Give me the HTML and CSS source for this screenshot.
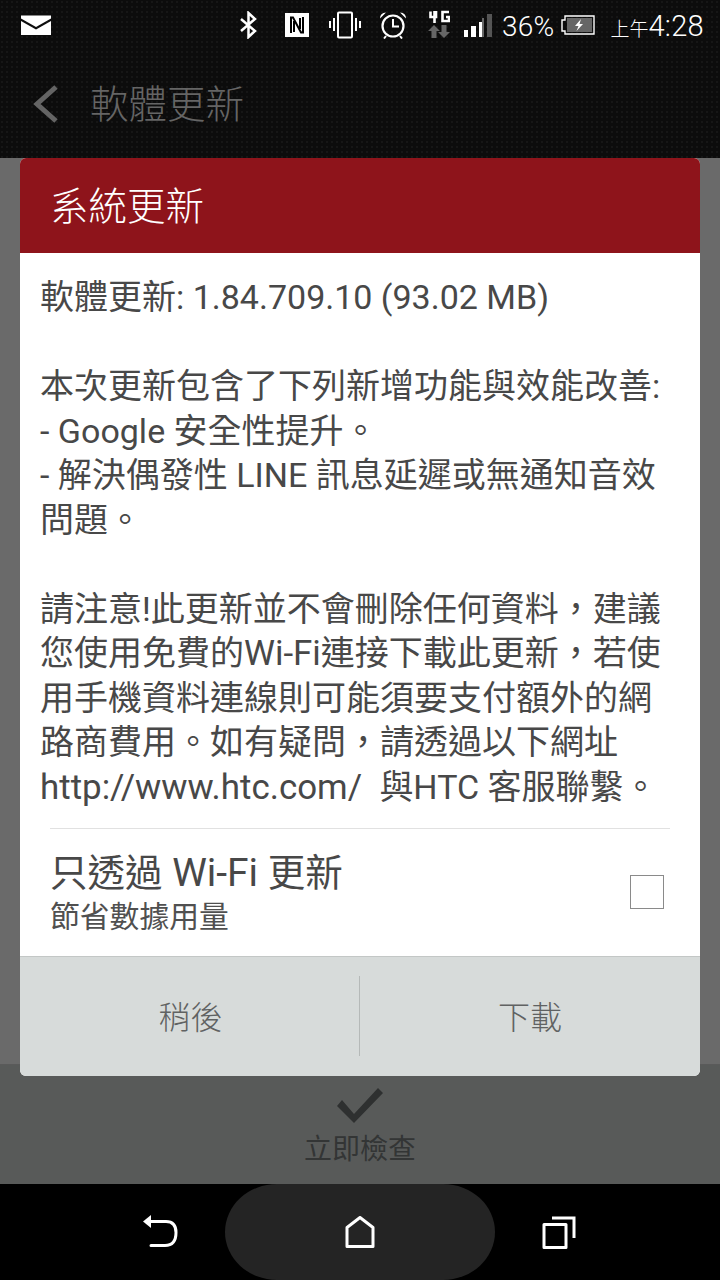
FILE: index.html
```html
<!DOCTYPE html>
<html lang="zh-Hant">
<head>
<meta charset="utf-8">
<title>軟體更新</title>
<link rel="stylesheet" href="styles.css">
</head>
<body>
<div class="screen">
  <header class="top">
    <div class="status">
      <svg class="ic-mail" width="32" height="22" viewBox="0 0 32 22"><path fill="#fff" d="M0 1.500h30v3L15 13 0 4.500zM0 7l15 8.500L30 7v14H0z"/></svg>
      <span class="spacer"></span>
      <svg class="ic" width="18" height="28" viewBox="0 0 18 28"><path fill="none" stroke="#fff" stroke-width="2.500" d="M2 8l14 12-6.500 6V2L16 8 2 20"/></svg>
      <svg class="ic gap1" width="24" height="24" viewBox="0 0 24 24"><path fill="#fff" d="M0 0h24v24H0z"/><path fill="none" stroke="#000" stroke-width="2" d="M6 20V4.500h2L16 19.500h2V4M9 8v11M15 5v11"/></svg>
      <svg class="ic gap2" width="32" height="28" viewBox="0 0 32 28"><path fill="none" stroke="#fff" stroke-width="2" d="M9 2.500q0-1 1-1h12q1 0 1 1v23q0 1-1 1H10q-1 0-1-1zM5 7v13M1 10v7M27 7v13M31 10v7"/></svg>
      <svg class="ic gap3" width="28" height="28" viewBox="0 0 28 28"><circle cx="14" cy="15" r="10.500" fill="none" stroke="#fff" stroke-width="2.200"/><path fill="none" stroke="#fff" stroke-width="2" d="M14 8v7.500h6M7 25l-2 2.500M21 25l2 2.500"/><path fill="#fff" d="M1 7.500Q1 2 7 1.500zM27 7.500Q27 2 21 1.500z"/></svg>
      <svg class="ic gap4" width="22" height="30" viewBox="0 0 22 30"><path fill="none" stroke="#fff" stroke-width="2.600" d="M8 1v6H2.500V1.500M6.500 1v12M21 2h-6.500v9H21V7h-3"/><path fill="#666" d="M6 15l6 6H8.500v7h-5v-7H0zM16 28l6-6h-3.500v-7h-5v7H10z"/></svg>
      <svg class="ic gap5" width="28" height="24" viewBox="0 0 28 24"><path fill="#fff" d="M0 16h4v7H0zM7 12h5v11H7z"/><path fill="#fff" d="M15 8h3v15h-3z"/><path fill="#666" d="M18 8h2v15h-2zM18 4h2v4h-2z"/><path fill="#555" d="M23 0h5v23h-5z"/></svg>
      <span class="pct">36%</span>
      <svg class="ic gap6" width="34" height="20" viewBox="0 0 34 20"><path fill="none" stroke="#fff" stroke-width="1.400" d="M4 1h29v18H4v-3H1V5h3z"/><path fill="#666" d="M6 3h25v14H6z"/><path fill="#fff" d="M20 4l-6 7h3.500l-2 5 6.500-7h-3.500z"/></svg>
      <span class="clock"><span class="ampm">上午</span>4:28</span>
    </div>
    <div class="bar">
      <svg class="ic-back" width="26" height="38" viewBox="0 0 26 38"><path fill="none" stroke="#646464" stroke-width="5" d="M24 2L5 19l19 17"/></svg>
      <h1 class="bar-title">軟體更新</h1>
    </div>
  </header>

  <main class="page">
    <div class="page-fill"></div>
    <div class="check-bar">
      <svg width="48" height="36" viewBox="0 0 48 36"><path fill="#2e3030" d="M6 12L1 18l17 17L47 5l-5-5-24 26z"/></svg>
      <span class="check-label">立即檢查</span>
    </div>

    <section class="dialog">
      <h2 class="dlg-head">系統更新</h2>
      <div class="dlg-body">
        <p class="msg">軟體更新: 1.84.709.10 (93.02 MB)<br><br>本次更新包含了下列新增功能與效能改善:<br>- Google 安全性提升。<br>- 解決偶發性 LINE 訊息延遲或無通知音效<br>問題。<br><br>請注意!此更新並不會刪除任何資料，建議<br>您使用免費的<span class="lat">Wi-Fi</span>連接下載此更新，若使<br>用手機資料連線則可能須要支付額外的網<br>路商費用。如有疑問，請透過以下網址<br><span class="lat">http://www.htc.com/&nbsp; </span>與HTC 客服聯繫。</p>
        <div class="opt">
          <div class="opt-text">
            <div class="opt-title">只透過<span class="lat-t"> Wi-Fi </span>更新</div>
            <div class="opt-sub">節省數據用量</div>
          </div>
          <span class="box"></span>
        </div>
      </div>
      <div class="dlg-foot">
        <button class="btn btn-left">稍後</button>
        <span class="sep"></span>
        <button class="btn">下載</button>
      </div>
    </section>
  </main>

  <nav class="nav">
    <svg width="36" height="34" viewBox="0 0 36 34"><path fill="none" stroke="#fff" stroke-width="3" stroke-linecap="round" d="M6 6.500h18q10 0 10 11 0 13-11 13H9"/><path fill="#fff" d="M1 6.500L9 0v13z"/></svg>
    <div class="home">
      <svg width="30" height="32" viewBox="0 0 30 32"><path fill="none" stroke="#fff" stroke-width="3" stroke-linejoin="round" d="M2 30.500V11.500L15 1.500l13 10v19z"/></svg>
    </div>
    <svg width="34" height="34" viewBox="0 0 34 34"><path fill="none" stroke="#fff" stroke-width="3" stroke-linejoin="round" d="M2 9.500h22v23H2z"/><path fill="none" stroke="#fff" stroke-width="3" d="M10 3h22v20"/></svg>
  </nav>
</div>
</body>
</html>
```

FILE: styles.css
```css
* { box-sizing: border-box; }
html, body { margin: 0; padding: 0; }
body {
  width: 720px;
  height: 1280px;
  overflow: hidden;
  background: #000;
  font-family: Roboto, "Noto Sans CJK TC", sans-serif;
}
.screen { display: flex; flex-direction: column; height: 1280px; }

.top {
  height: 158px;
  flex: none;
  background-color: #0c0c0c;
  background-image: radial-gradient(circle at 2px 2px, #161616 0, #161616 1px, transparent 1.500px);
  background-size: 5px 5px;
}
.status {
  height: 52px;
  display: flex;
  align-items: center;
  padding: 0 16px 2px 21px;
}
.spacer { flex: 1; }
.ic { flex: none; display: block; }
.gap1 { margin-left: 28px; }
.gap2 { margin-left: 20px; }
.gap3 { margin-left: 18px; }
.gap4 { margin-left: 21px; }
.gap5 { margin-left: 14px; margin-top: 2px; }
.pct { margin-left: 10px; color: #fff; font-size: 28px; font-weight: 300; letter-spacing: .2px; padding-top: 2px; }
.gap6 { margin-left: 7px; }
.clock { margin-left: 15px; color: #fff; font-size: 29px; font-weight: 300; white-space: nowrap; letter-spacing: .3px; padding-top: 2px; }
.ampm { font-size: 19px; letter-spacing: 0; }

.bar { height: 106px; display: flex; align-items: center; padding: 0 0 0 32px; }
.ic-back { flex: none; margin-top: -2px; }
.bar-title { margin: 0 0 0 32px; font-size: 38.500px; font-weight: 300; line-height: 1; color: #656565; }

.page { position: relative; flex: 1; display: flex; flex-direction: column; background: #6a6a6a; }
.page-fill { flex: 1; }
.check-bar {
  height: 120px;
  flex: none;
  border-top: 1px solid #5a5a5a;
  background: #585a59;
  display: flex;
  flex-direction: column;
  align-items: center;
  padding-top: 23px;
}
.check-label { margin-top: 10px; font-size: 28px; line-height: 32px; font-weight: 400; color: #333535; }

.dialog {
  position: absolute;
  top: 0;
  left: 20px;
  width: 680px;
  height: 918px;
  display: flex;
  flex-direction: column;
  border-radius: 6px;
  overflow: hidden;
  background: #fff;
}
.dlg-head {
  margin: 0;
  height: 95px;
  flex: none;
  padding: 0 0 0 30px;
  background: #8e141b;
  color: #fff;
  font-size: 38.500px;
  line-height: 98px;
  font-weight: 300;
}
.dlg-body { flex: 1; display: flex; flex-direction: column; padding: 0 30px 0 20px; }
.msg {
  margin: 22px 0 0;
  font-size: 34px;
  line-height: 44.500px;
  font-weight: 400;
  color: #484848;
  white-space: nowrap;
}
.lat { font-size: 34.900px; line-height: 1; }
.opt {
  margin: 19px 0 0 10px;
  flex: 1;
  border-top: 1px solid #e1e1e1;
  display: flex;
  align-items: flex-start;
  justify-content: space-between;
}
.opt-text { padding-top: 22px; }
.opt-title { font-size: 37.500px; line-height: 44px; font-weight: 400; color: #484848; white-space: nowrap; }
.lat-t { font-size: 39px; line-height: 1; }
.opt-sub { margin-top: 3px; font-size: 29.800px; line-height: 38px; font-weight: 400; color: #505050; white-space: nowrap; }
.box { width: 34px; height: 34px; margin: 46px 6px 0 0; border: 1px solid #8a8a8a; background: #fff; }

.dlg-foot {
  height: 120px;
  flex: none;
  display: flex;
  align-items: center;
  background: #d7dbda;
  border-top: 1px solid #c3c7c6;
}
.btn {
  flex: 1;
  height: 100%;
  border: 0;
  padding: 0 0 4px;
  background: transparent;
  font-family: inherit;
  font-size: 32px;
  font-weight: 300;
  color: #606262;
}
.btn-left { flex: 0 0 341px; }
.sep { width: 1px; height: 80px; flex: none; margin-left: -2px; margin-top: -2px; background: #b5b9b8; }

.nav {
  height: 96px;
  flex: none;
  background: #000;
  display: flex;
  align-items: center;
  justify-content: center;
  gap: 47px;
  padding-right: 2px;
}
.home {
  width: 270px;
  height: 96px;
  border-radius: 52px / 48px;
  background: #242424;
  display: flex;
  align-items: center;
  justify-content: center;
}
```
